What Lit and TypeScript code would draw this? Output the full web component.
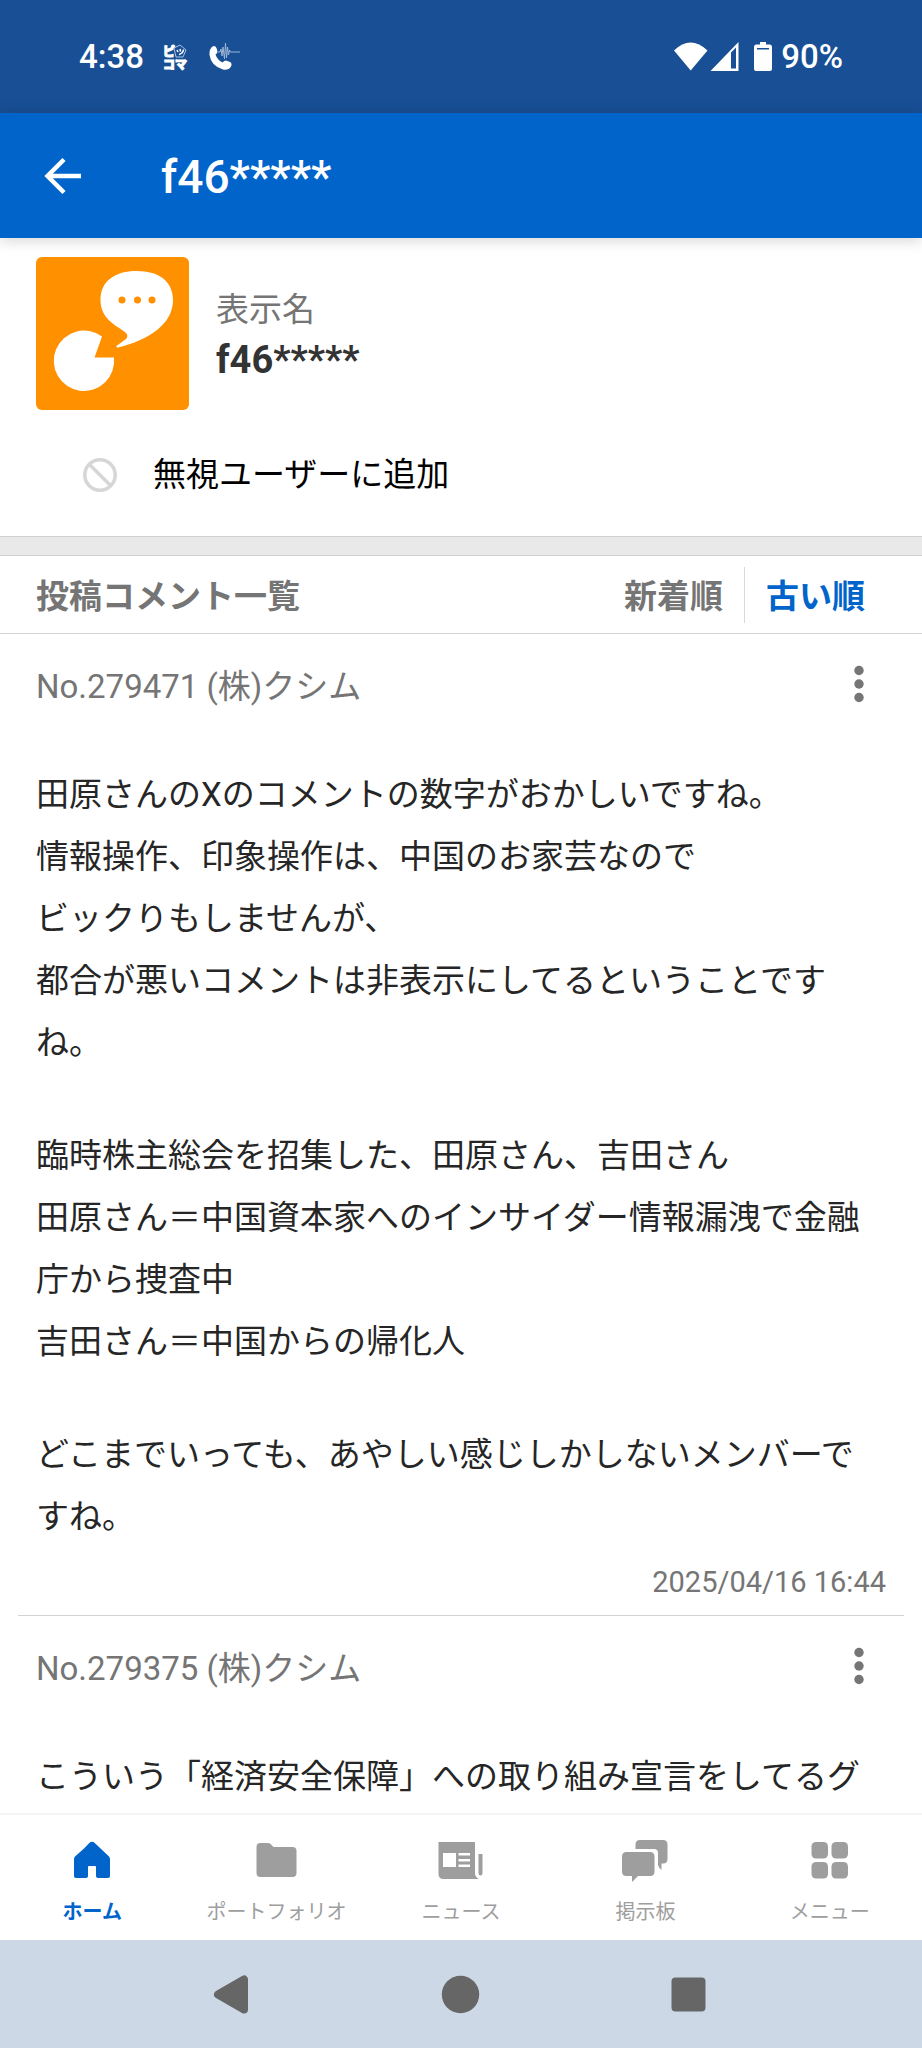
import { LitElement, html, css, svg } from "lit";
import { customElement, property, state } from "lit/decorators.js";
import { classMap } from "lit/directives/class-map.js";

interface Post {
  no: string;
  board: string;
  paragraphs: string[][];
  date: string;
}

const posts: Post[] = [
  {
    no: "279471",
    board: "(株)クシム",
    paragraphs: [
      [
        "田原さんのXのコメントの数字がおかしいですね。",
        "情報操作、印象操作は、中国のお家芸なので",
        "ビックりもしませんが、",
        "都合が悪いコメントは非表示にしてるということですね。",
      ],
      [
        "臨時株主総会を招集した、田原さん、吉田さん",
        "田原さん＝中国資本家へのインサイダー情報漏洩で金融庁から捜査中",
        "吉田さん＝中国からの帰化人",
      ],
      ["どこまでいっても、あやしい感じしかしないメンバーですね。"],
    ],
    date: "2025/04/16 16:44",
  },
  {
    no: "279375",
    board: "(株)クシム",
    paragraphs: [["こういう「経済安全保障」への取り組み宣言をしてるグ"]],
    date: "",
  },
];

const tabs = [
  {
    label: "ホーム",
    icon: svg`<path d="M16 7.500 21.500 1.800Q24 -.2 26.500 1.800L41 15.500Q42 16.700 42 18.500V35Q42 37 40 37H30Q28 37 28 35V26Q28 25 27 25H21Q20 25 20 26V35Q20 37 18 37H8Q6 37 6 35V18.500Q6 16.700 7 15.500Z"/>`,
  },
  {
    label: "ポートフォリオ",
    icon: svg`<path d="M7.500 2H15Q16.500 2 17.500 3L20.500 6H39.500Q43.500 6 43.500 10V32Q43.500 36 39.500 36H7.500Q3.500 36 3.500 32V6Q3.500 2 7.500 2Z"/>`,
  },
  {
    label: "ニュース",
    icon: svg`<path fill-rule="evenodd" d="M1.500 1H38V32Q38 36 42 38H6.500Q1.500 38 1.500 33ZM6 12V26H19V12ZM21.500 12V14.500H33V12ZM21.500 18V20.500H33V18ZM21.500 23.500V26H33V23.500Z"/><path d="M41.500 13H45.500V32Q45.500 34.500 43.500 34.500Q41.500 34.500 41.500 32Z"/>`,
  },
  {
    label: "掲示板",
    icon: svg`<path d="M19 -1H42Q46.500 -1 46.500 3.500V18Q46.500 22.500 42 22.500H40.500V29Q38 27.500 37 24V12Q37 8 33 8H14.500V3.500Q14.500 -1 19 -1Z"/><path d="M5.500 11H29Q33.500 11 33.500 15.500V30.500Q33.500 35 29 35H17L11 41V35H5.500Q1 35 1 30.500V15.500Q1 11 5.500 11Z"/>`,
  },
  {
    label: "メニュー",
    icon: svg`<rect x="5.500" y="1" width="16.500" height="16.500" rx="4.500"/><rect x="25.500" y="1" width="16.500" height="16.500" rx="4.500"/><rect x="5.500" y="21" width="16.500" height="16.500" rx="4.500"/><rect x="25.500" y="21" width="16.500" height="16.500" rx="4.500"/>`,
  },
];

@customElement("post-item")
class PostItem extends LitElement {
  @property({ attribute: false }) post!: Post;

  static styles = css`
    :host {
      display: block;
      padding: 0 36px;
    }
    .head {
      display: flex;
      align-items: center;
      justify-content: space-between;
      height: 106px;
      color: #757575;
    }
    .title {
      margin: 0;
      font-size: 33px;
      font-weight: 400;
      line-height: 48px;
    }
    .more {
      display: flex;
      padding: 0 16px 6px;
      border: 0;
      background: none;
      color: inherit;
    }
    .body {
      display: flex;
      flex-direction: column;
      gap: 51px;
      padding-top: 24px;
      color: #262626;
      font-size: 33px;
      line-height: 62px;
    }
    .paragraph {
      margin: 0;
    }
    .line {
      display: block;
    }
    .date {
      display: block;
      padding: 14px 0 13px;
      color: #757575;
      font-size: 29px;
      line-height: 40px;
      text-align: right;
    }
  `;

  render() {
    const { no, board, paragraphs, date } = this.post;
    return html`
      <article>
        <header class="head">
          <h3 class="title">No.${no} ${board}</h3>
          <button class="more" aria-label="その他">
            <svg width="22" height="40" viewBox="0 0 22 40" fill="currentColor">
              <circle cx="11" cy="6.500" r="4.700" />
              <circle cx="11" cy="20" r="4.700" />
              <circle cx="11" cy="33.500" r="4.700" />
            </svg>
          </button>
        </header>
        <div class="body">
          ${paragraphs.map(
            (p) => html`<p class="paragraph">${p.map((l) => html`<span class="line">${l}</span>`)}</p>`
          )}
        </div>
        ${date ? html`<time class="date">${date}</time>` : ""}
      </article>
    `;
  }
}

@customElement("app-root")
class AppRoot extends LitElement {
  @state() private order = "古い順";
  @state() private tab = "ホーム";

  static styles = css`
    :host {
      display: flex;
      flex-direction: column;
      height: 100vh;
      overflow: hidden;
      background: #fff;
      color: #262626;
      font-family: Roboto, "Noto Sans CJK JP", sans-serif;
    }
    button {
      margin: 0;
      border: 0;
      background: none;
      color: inherit;
      font-family: inherit;
      cursor: pointer;
    }
    svg {
      display: block;
      flex: none;
      overflow: visible;
    }
    .status {
      display: flex;
      align-items: center;
      flex: none;
      height: 113px;
      padding: 0 79px;
      box-sizing: border-box;
      background: #184f95;
      color: #fff;
      font-size: 33px;
      font-weight: 500;
      line-height: 40px;
    }
    .notices {
      display: flex;
      flex: 1;
      gap: 22px;
      padding-left: 20px;
    }
    .signals {
      display: flex;
      align-items: center;
      margin-right: 9px;
    }
    .logo {
      font-family: "Noto Sans CJK JP", sans-serif;
      font-size: 12px;
      font-weight: 900;
      stroke: #fff;
      stroke-width: 1px;
    }
    .appbar {
      display: flex;
      align-items: center;
      flex: none;
      gap: 72px;
      height: 125px;
      padding: 0 33px;
      background: #0064cb;
      color: #fff;
      box-shadow: 0 2px 14px rgba(0, 0, 0, 0.18);
      z-index: 1;
    }
    .back {
      display: flex;
      padding: 0 6px 0 10px;
    }
    .name {
      margin: 0;
      padding-top: 2px;
      font-size: 46px;
      font-weight: 500;
      line-height: 60px;
    }
    .content {
      flex: 1;
      min-height: 0;
      overflow: hidden;
    }
    .profile {
      display: flex;
      gap: 27px;
      padding: 19px 36px 0;
    }
    .profile-text {
      display: flex;
      flex-direction: column;
      margin: 0;
      padding-top: 28px;
    }
    .label {
      color: #757575;
      font-size: 33px;
      line-height: 50px;
    }
    .value {
      margin: 0;
      color: #333;
      font-size: 38px;
      font-weight: 700;
      line-height: 50px;
    }
    .ignore {
      display: flex;
      align-items: center;
      gap: 35px;
      padding: 42px 82px 38px;
      color: #000;
      font-size: 33px;
      line-height: 46px;
    }
    .list-band {
      height: 18px;
      border: 1px solid #d0d0d0;
      border-width: 1px 0;
      background: #e9e9e9;
    }
    .list-head {
      display: flex;
      align-items: center;
      justify-content: space-between;
      height: 77px;
      padding: 0 36px;
      border-bottom: 1px solid #d3d3d3;
      color: #757575;
    }
    .list-title {
      margin: 0;
      padding-top: 4px;
      font-size: 33px;
      font-weight: 700;
      line-height: 52px;
    }
    .orders {
      display: flex;
    }
    .order {
      padding: 4px 21px 0;
      font-size: 33px;
      font-weight: 700;
      line-height: 52px;
    }
    .order + .order {
      padding-right: 21px;
      border-left: 1px solid #d9d9d9;
    }
    .order.on {
      color: #0064cb;
    }
    .rule {
      height: 1px;
      margin: 0 18px;
      border: 0;
      background: #d3d3d3;
    }
    .tabs {
      display: grid;
      grid-template-columns: repeat(5, 1fr);
      flex: none;
      border-top: 2px solid #f5f5f5;
      background: #fff;
      color: #9e9e9e;
    }
    .tab {
      display: flex;
      flex-direction: column;
      align-items: center;
      gap: 17px;
      padding: 26px 0 14px;
      font-size: 20px;
      line-height: 28px;
    }
    .tab.on {
      color: #0064cb;
      font-weight: 700;
    }
    .system {
      display: grid;
      grid-template-columns: repeat(3, 1fr);
      flex: none;
      padding: 0 13%;
      background: #ccd8e6;
      color: #666;
    }
    .key {
      display: flex;
      justify-content: center;
      padding: 34px 0;
    }
  `;

  render() {
    return html`
      <div class="status">
        <span>4:38</span>
        <div class="notices">
          <svg width="22" height="26" viewBox="0 0 22 26" fill="#fff" role="img" aria-label="ピッコマ">
            <text class="logo" x="-1" y="12">ピ</text>
            <text class="logo" x="-1" y="25">コマ</text>
            <path d="M10 4 16 1 22 6 19 13 12 13Z" fill="#184f95" stroke="#a9c3e6" stroke-width="1" />
            <path d="M13 6 14 8M16 5 16.500 7.500M19.500 5.500Q19 9.500 15 10.500" fill="none" stroke="#fff" stroke-width="1.500" />
          </svg>
          <svg width="32" height="26" viewBox="0 0 32 26">
            <path d="M4.500 2.500Q7 1 8.500 4L9.500 7.500Q9.500 9.500 7.500 10.500Q9 15.500 14.500 18.500Q16 16.500 18 16.500L22 18Q24.500 19.500 23 22.500Q20.500 26.500 15 25.500Q3 22 1.500 11Q1 5 4.500 2.500Z" fill="#fff" />
            <path d="M10 8H12L13 5 14 12 15 3 16.500 15 17.500 -1 18.500 14 19.500 3 20.500 11 21.500 6 22.500 8H32" fill="none" stroke="#9db6d8" stroke-width="1" />
          </svg>
        </div>
        <div class="signals">
          <svg width="80" height="30" viewBox="0 0 80 30" fill="#fff">
            <path d="M0 8.500Q16.500 -7.500 33.500 8.500L16.700 28.500Z" />
            <path fill-rule="evenodd" d="M36.500 29 64.500 0V29ZM57 10.500V26.500H62V5.500Z" />
          </svg>
          <svg width="18" height="30" viewBox="0 0 18 30" fill="#fff">
            <path fill-rule="evenodd" d="M6 0H12V2.500H16Q18 2.500 18 5V27Q18 29 16 29H2Q0 29 0 27V5Q0 2.500 2 2.500H6ZM3 6V7.500H15V6Z" />
          </svg>
        </div>
        <span>90%</span>
      </div>
      <header class="appbar">
        <button class="back" aria-label="戻る">
          <svg width="40" height="40" viewBox="0 0 40 40" fill="none" stroke="#fff" stroke-width="4.500">
            <path d="M38 20H6M21 3.500 4.500 20 21 36.500" />
          </svg>
        </button>
        <h1 class="name">f46*****</h1>
      </header>
      <main class="content">
        <section class="profile">
          <svg width="153" height="153" viewBox="0 0 153 153">
            <rect width="153" height="153" rx="6" fill="#ff9000" />
            <path d="M100.500 14C124 14 137 25 137 43C137 67 113 83 82 90.500Q79.500 90.500 81 88.500L88 83.500Q93 80.500 90.500 76.500C83 69 64.500 64 64.500 43C64.500 24 79 14 100.500 14Z" fill="#fff" />
            <g fill="#ff9000">
              <circle cx="86" cy="43" r="3.500" />
              <circle cx="101.500" cy="43" r="3.500" />
              <circle cx="116" cy="43" r="3.500" />
            </g>
            <path d="M58.500 100.500H78A30.200 30.200 0 1 1 66 79.500Z" fill="#fff" />
          </svg>
          <dl class="profile-text">
            <dt class="label">表示名</dt>
            <dd class="value">f46*****</dd>
          </dl>
        </section>
        <button class="ignore">
          <svg width="36" height="36" viewBox="0 0 36 36" fill="none" stroke="#d6d6d6" stroke-width="3.500">
            <circle cx="18" cy="18" r="15.200" />
            <path d="M7 7 29 29" />
          </svg>
          無視ユーザーに追加
        </button>
        <div class="list-band"></div>
        <section>
          <header class="list-head">
            <h2 class="list-title">投稿コメント一覧</h2>
            <div class="orders">
              ${["新着順", "古い順"].map(
                (o) => html`<button
                  class=${classMap({ order: true, on: this.order === o })}
                  @click=${() => (this.order = o)}
                >${o}</button>`
              )}
            </div>
          </header>
          ${posts.map(
            (p, i) => html`${i ? html`<hr class="rule" />` : ""}<post-item .post=${p}></post-item>`
          )}
        </section>
      </main>
      <nav class="tabs">
        ${tabs.map(
          (t) => html`<button
            class=${classMap({ tab: true, on: this.tab === t.label })}
            @click=${() => (this.tab = t.label)}
          >
            <svg width="48" height="40" viewBox="0 0 48 40" fill="currentColor">${t.icon}</svg>
            ${t.label}
          </button>`
        )}
      </nav>
      <div class="system">
        <button class="key" aria-label="戻る">
          <svg width="40" height="40" viewBox="0 0 40 40" fill="currentColor" stroke="currentColor" stroke-width="8" stroke-linejoin="round">
            <path d="M4 20.500 30 5.500V35.500Z" />
          </svg>
        </button>
        <button class="key" aria-label="ホーム">
          <svg width="40" height="40" viewBox="0 0 40 40" fill="currentColor"><circle cx="19.500" cy="20.500" r="18.700" /></svg>
        </button>
        <button class="key" aria-label="履歴">
          <svg width="40" height="40" viewBox="0 0 40 40" fill="currentColor"><rect x="3.500" y="3.500" width="34" height="34" rx="4" /></svg>
        </button>
      </div>
    `;
  }
}
